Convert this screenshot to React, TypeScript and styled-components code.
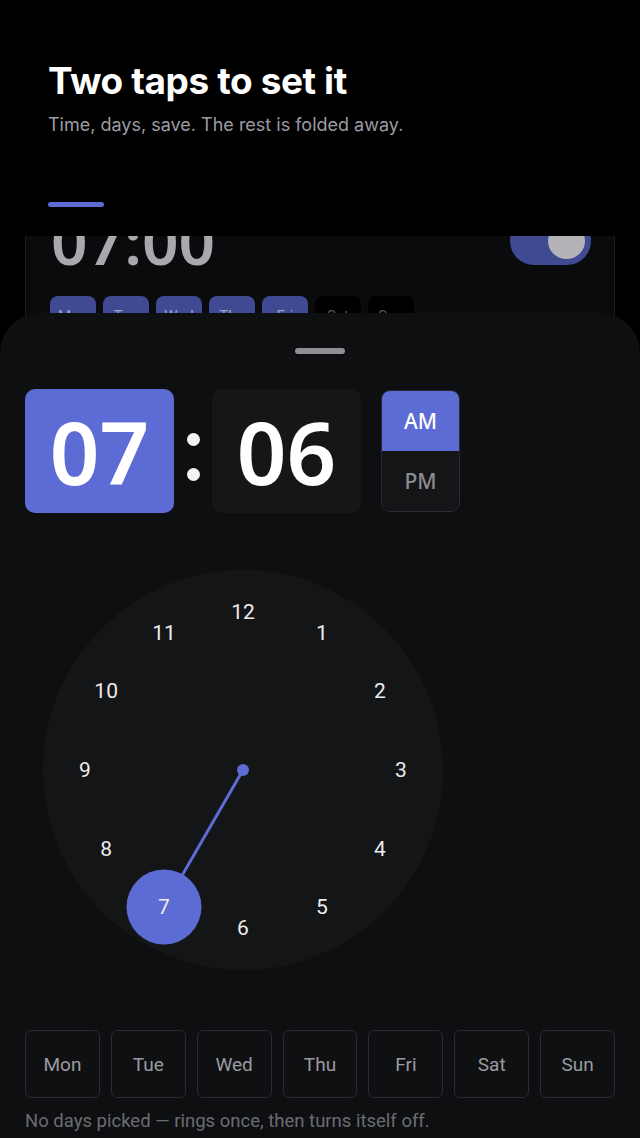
import React from "react";
import styled, { createGlobalStyle } from "styled-components";

const ACCENT = "#5d6bd4";

const GlobalStyle = createGlobalStyle`
  html, body { margin: 0; padding: 0; background: #000; }
  body { font-family: "Roboto", "Noto Sans", sans-serif; }
  * { box-sizing: border-box; }
`;

const Screen = styled.div`
  position: relative;
  width: 640px;
  height: 1138px;
  overflow: hidden;
  background: #000;
  display: flex;
  flex-direction: column;
`;

const Header = styled.header`
  position: relative;
  z-index: 1;
  height: 236px;
  flex: none;
  padding: 59px 48px 0;
  background: #000;
  display: flex;
  flex-direction: column;
`;

const Title = styled.h1`
  margin: 0;
  font-family: "Inter", sans-serif;
  font-weight: 700;
  font-size: 37px;
  line-height: 44px;
  letter-spacing: -0.4px;
  color: #ffffff;
`;

const Subtitle = styled.p`
  margin: 10px 0 0;
  font-family: "Inter", sans-serif;
  font-weight: 400;
  font-size: 18px;
  line-height: 24px;
  color: #9b9ca3;
`;

const AccentBar = styled.div`
  margin-top: 65px;
  width: 56px;
  height: 5px;
  border-radius: 3px;
  background: ${ACCENT};
`;

const List = styled.div`
  flex: 1;
  overflow: hidden;
  padding: 0 25px;
`;

const AlarmCard = styled.div`
  margin-top: -50px;
  border: 1px solid #1c1d21;
  border-radius: 16px;
  background: #0a0b0c;
  padding: 18px 23px 24px;
`;

const CardTop = styled.div`
  display: flex;
  align-items: center;
  justify-content: space-between;
`;

const CardTime = styled.div`
  font-family: "Noto Sans", sans-serif;
  font-weight: 600;
  font-size: 64px;
  line-height: 72px;
  color: #a9a9ad;
  padding-left: 2px;
`;

const Toggle = styled.div`
  width: 81px;
  height: 48px;
  border-radius: 24px;
  background: #3f4a92;
  padding: 6px;
  display: flex;
  justify-content: flex-end;
`;

const Knob = styled.div`
  width: 37px;
  height: 36px;
  border-radius: 50%;
  background: #b4b4b8;
`;

const ChipRow = styled.div`
  margin-top: 19px;
  padding-left: 1px;
  display: flex;
  gap: 7px;
`;

const Chip = styled.div<{ $on: boolean }>`
  width: 46px;
  height: 40px;
  border-radius: 8px;
  background: ${(p) => (p.$on ? "#3f4a92" : "#000")};
  color: ${(p) => (p.$on ? "#9da3c8" : "#55565b")};
  font-family: "Roboto", sans-serif;
  font-size: 15px;
  display: flex;
  align-items: center;
  justify-content: center;
`;

const Sheet = styled.section`
  position: absolute;
  left: 0;
  right: 0;
  top: 313px;
  bottom: 0;
  z-index: 2;
  background: #0e0f11;
  border-radius: 40px 40px 0 0;
  padding: 35px 25px 0;
  display: flex;
  flex-direction: column;
`;

const Handle = styled.div`
  align-self: center;
  width: 50px;
  height: 6px;
  border-radius: 3px;
  background: #8e8e94;
`;

const TimeRow = styled.div`
  margin-top: 35px;
  display: flex;
  align-items: center;
`;

const TimeBox = styled.div<{ $active: boolean }>`
  width: 149px;
  height: 124px;
  border-radius: 10px;
  background: ${(p) => (p.$active ? ACCENT : "#151618")};
  color: #ffffff;
  font-family: "Noto Sans", "Open Sans", sans-serif;
  font-weight: 600;
  font-size: 87px;
  line-height: 1;
  display: flex;
  align-items: center;
  justify-content: center;
`;

const Colon = styled.div`
  width: 38px;
  align-self: stretch;
  display: flex;
  flex-direction: column;
  align-items: center;
  justify-content: center;
  gap: 22px;
  padding-top: 12px;
`;

const Dot = styled.span`
  width: 13px;
  height: 13px;
  border-radius: 50%;
  background: #f4f4f6;
`;

const Meridiem = styled.div`
  margin-left: 20px;
  width: 79px;
  height: 122px;
  border: 1px solid #2a2b30;
  border-radius: 9px;
  overflow: hidden;
  display: flex;
  flex-direction: column;
`;

const MeridiemOption = styled.div<{ $active: boolean }>`
  flex: 1;
  display: flex;
  align-items: center;
  justify-content: center;
  background: ${(p) => (p.$active ? ACCENT : "#141517")};
  color: ${(p) => (p.$active ? "#ffffff" : "#8b8c92")};
  font-family: "Noto Sans", "Open Sans", sans-serif;
  font-weight: 500;
  font-size: 21px;
`;

const Dial = styled.div`
  position: relative;
  margin: 57px 0 0 18px;
  width: 400px;
  height: 400px;
  border-radius: 50%;
  background: #141517;
  flex: none;
`;

const HandLayer = styled.svg`
  position: absolute;
  inset: 0;
`;

const DialNumber = styled.span<{ $selected: boolean }>`
  position: absolute;
  transform: translate(-50%, -50%);
  width: ${(p) => (p.$selected ? "75px" : "40px")};
  height: ${(p) => (p.$selected ? "75px" : "40px")};
  border-radius: 50%;
  background: ${(p) => (p.$selected ? ACCENT : "transparent")};
  color: #ececef;
  font-family: "Roboto", sans-serif;
  font-size: 21px;
  display: flex;
  align-items: center;
  justify-content: center;
`;

const Days = styled.div`
  margin-top: 60px;
  display: grid;
  grid-template-columns: repeat(7, 1fr);
  gap: 11px;
`;

const DayButton = styled.div`
  height: 68px;
  border: 1px solid #2a2b30;
  border-radius: 6px;
  background: #0f1012;
  color: #9a9ba1;
  font-family: "Roboto", sans-serif;
  font-size: 19px;
  display: flex;
  align-items: center;
  justify-content: center;
`;

const Hint = styled.p`
  margin: 12px 0 0;
  font-family: "Roboto", sans-serif;
  font-size: 18.5px;
  line-height: 22px;
  color: #6b6c72;
`;

const chipDays = [
  { l: "Mon", on: true },
  { l: "Tue", on: true },
  { l: "Wed", on: true },
  { l: "Thu", on: true },
  { l: "Fri", on: true },
  { l: "Sat", on: false },
  { l: "Sun", on: false },
];

const days = ["Mon", "Tue", "Wed", "Thu", "Fri", "Sat", "Sun"];

const R = 158;
const C = 200;
const selectedHour = 7;

function pos(h: number) {
  const a = (h % 12) * (Math.PI / 6);
  return { x: C + R * Math.sin(a), y: C - R * Math.cos(a) };
}

export default function App() {
  const sel = pos(selectedHour);
  return (
    <>
      <GlobalStyle />
      <Screen>
        <Header>
          <Title>Two taps to set it</Title>
          <Subtitle>Time, days, save. The rest is folded away.</Subtitle>
          <AccentBar />
        </Header>
        <List>
          <AlarmCard>
            <CardTop>
              <CardTime>07:00</CardTime>
              <Toggle>
                <Knob />
              </Toggle>
            </CardTop>
            <ChipRow>
              {chipDays.map((d) => (
                <Chip key={d.l} $on={d.on}>
                  {d.l}
                </Chip>
              ))}
            </ChipRow>
          </AlarmCard>
        </List>
        <Sheet>
          <Handle />
          <TimeRow>
            <TimeBox $active>07</TimeBox>
            <Colon>
              <Dot />
              <Dot />
            </Colon>
            <TimeBox $active={false}>06</TimeBox>
            <Meridiem>
              <MeridiemOption $active>AM</MeridiemOption>
              <MeridiemOption $active={false}>PM</MeridiemOption>
            </Meridiem>
          </TimeRow>
          <Dial>
            <HandLayer width="400" height="400" viewBox="0 0 400 400">
              <line x1={C} y1={C} x2={sel.x} y2={sel.y} stroke={ACCENT} strokeWidth="3" />
              <circle cx={C} cy={C} r="6" fill={ACCENT} />
            </HandLayer>
            {Array.from({ length: 12 }, (_, i) => i + 1).map((h) => {
              const p = pos(h);
              return (
                <DialNumber
                  key={h}
                  $selected={h === selectedHour}
                  style={{ left: p.x, top: p.y }}
                >
                  {h}
                </DialNumber>
              );
            })}
          </Dial>
          <Days>
            {days.map((d) => (
              <DayButton key={d}>{d}</DayButton>
            ))}
          </Days>
          <Hint>No days picked — rings once, then turns itself off.</Hint>
        </Sheet>
      </Screen>
    </>
  );
}
